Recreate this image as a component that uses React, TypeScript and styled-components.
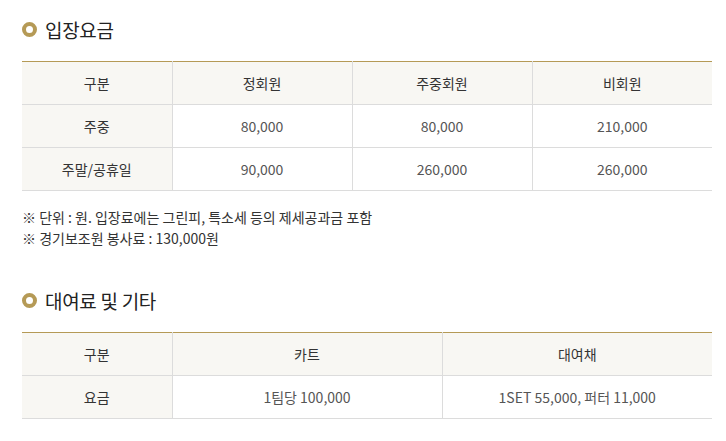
import React from "react";
import styled, { createGlobalStyle } from "styled-components";

const Global = createGlobalStyle`
  html, body { margin: 0; padding: 0; background: #fff; }
  body { font-family: "Noto Sans CJK KR", "Noto Sans", sans-serif; color: #333; }
`;

const Page = styled.div`
  padding: 16px 14px 0 22px;
  width: 690px;
`;

const Section = styled.section<{ $gap?: number }>`
  margin-bottom: ${(p) => p.$gap ?? 0}px;
`;

const Title = styled.h2`
  display: flex;
  align-items: center;
  gap: 8px;
  margin: 0 0 19px;
  height: 26px;
  font-size: 19px;
  font-weight: 400;
  color: #222;
  letter-spacing: -0.3px;
`;

const Ring = styled.span`
  width: 15px;
  height: 15px;
  box-sizing: border-box;
  border-radius: 50%;
  border: 4px solid #b59a56;
  flex: none;
`;

const Table = styled.table`
  width: 690px;
  border-collapse: collapse;
  table-layout: fixed;
  border-top: 1px solid #b59a56;
  font-size: 14px;
`;

const Cell = styled.td<{ $head?: boolean; $first?: boolean }>`
  height: 42px;
  padding: 0;
  text-align: center;
  vertical-align: middle;
  border-bottom: 1px solid #dcdcdc;
  border-left: ${(p) => (p.$first ? "none" : "1px solid #dcdcdc")};
  background: ${(p) => (p.$head || p.$first ? "#f8f7f3" : "#fff")};
  color: ${(p) => (p.$head || p.$first ? "#333" : "#555")};
  font-weight: 400;
`;

const Notes = styled.div`
  margin-top: 16px;
  font-size: 14px;
  line-height: 21px;
  color: #333;
`;

type TableProps = { widths: number[]; head: string[]; rows: string[][] };

const PriceTable = ({ widths, head, rows }: TableProps) => (
  <Table>
    <colgroup>
      {widths.map((w, i) => (
        <col key={i} style={{ width: w }} />
      ))}
    </colgroup>
    <thead>
      <tr>
        {head.map((h, i) => (
          <Cell as="th" key={i} $head $first={i === 0}>
            {h}
          </Cell>
        ))}
      </tr>
    </thead>
    <tbody>
      {rows.map((r, ri) => (
        <tr key={ri}>
          {r.map((c, ci) => (
            <Cell key={ci} $first={ci === 0}>
              {c}
            </Cell>
          ))}
        </tr>
      ))}
    </tbody>
  </Table>
);

export default function App() {
  return (
    <>
      <Global />
      <Page>
        <Section $gap={38}>
          <Title>
            <Ring />
            입장요금
          </Title>
          <PriceTable
            widths={[150, 180, 180, 180]}
            head={["구분", "정회원", "주중회원", "비회원"]}
            rows={[
              ["주중", "80,000", "80,000", "210,000"],
              ["주말/공휴일", "90,000", "260,000", "260,000"],
            ]}
          />
          <Notes>
            <div>※ 단위 : 원. 입장료에는 그린피, 특소세 등의 제세공과금 포함</div>
            <div>※ 경기보조원 봉사료 : 130,000원</div>
          </Notes>
        </Section>
        <Section>
          <Title>
            <Ring />
            대여료 및 기타
          </Title>
          <PriceTable
            widths={[150, 270, 270]}
            head={["구분", "카트", "대여채"]}
            rows={[["요금", "1팀당 100,000", "1SET 55,000, 퍼터 11,000"]]}
          />
        </Section>
      </Page>
    </>
  );
}
